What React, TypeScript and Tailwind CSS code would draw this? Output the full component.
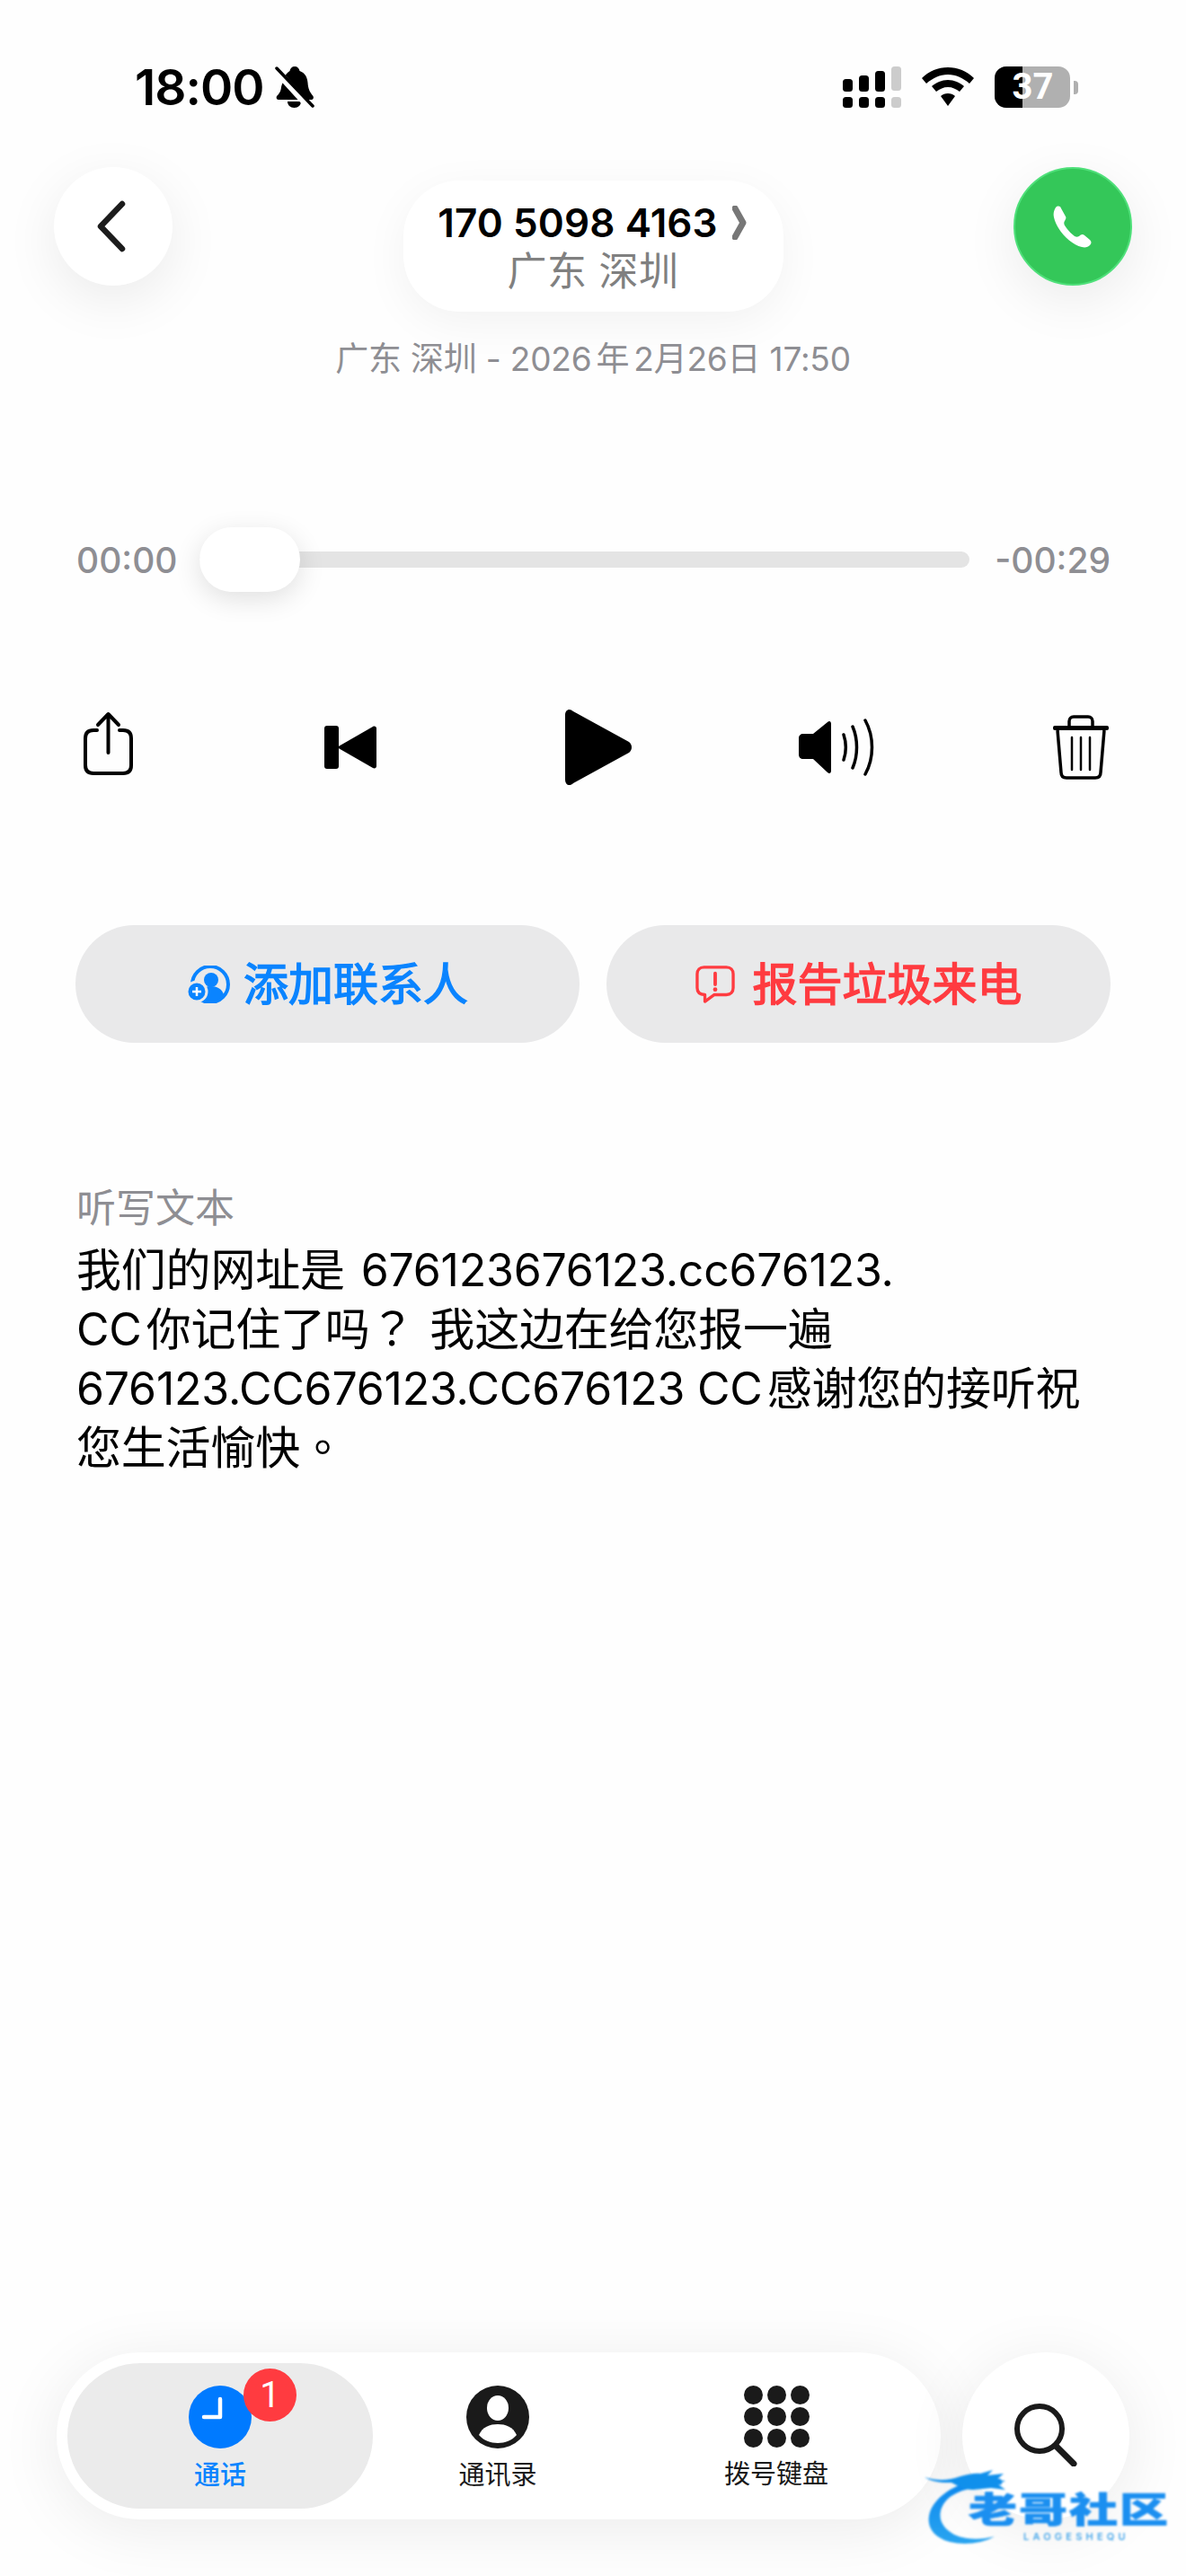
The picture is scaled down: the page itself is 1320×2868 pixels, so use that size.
import React from 'react';

const Sans = '"Inter", "Noto Sans CJK SC", sans-serif';

const BellSlash = () => (
  <svg width="44" height="46" viewBox="0 0 44 46" className="ml-[12px]">
    <path d="M22 0c3 0 5 2 5.500 5 6 2 8.500 7 9 13 .5 7 2 10 6 15 1 2 0 4-2 4H4c-2 0-3-2-2-4 3-3 4.500-5 5-10 1-5 2-4 3-8 1-6 4-8 6.500-10C17 2 19 0 22 0z" fill="#000" />
    <path d="M14 39h15c0 4-3 7-7.500 7S14 43 14 39z" fill="#000" />
    <path d="M0 3l40 44" stroke="#fff" strokeWidth="8" />
    <path d="M2 2l40 42" stroke="#000" strokeWidth="3.500" strokeLinecap="round" />
  </svg>
);

const Signal = () => (
  <svg width="66" height="46" viewBox="0 0 66 46">
    <rect x="0" y="14" width="11" height="14" rx="3.500" fill="#000" />
    <rect x="18" y="10" width="11" height="18" rx="3.500" fill="#000" />
    <rect x="36" y="5" width="11" height="23" rx="3.500" fill="#000" />
    <rect x="54" y="0" width="11" height="27" rx="3.500" fill="#ccc" />
    <rect x="0" y="34" width="11" height="12" rx="3.500" fill="#000" />
    <rect x="18" y="34" width="11" height="12" rx="3.500" fill="#000" />
    <rect x="36" y="34" width="11" height="12" rx="3.500" fill="#000" />
    <rect x="54" y="34" width="11" height="12" rx="3.500" fill="#ccc" />
  </svg>
);

const Wifi = () => (
  <svg width="58" height="44" viewBox="0 0 58 44">
    <path d="M29 0c11 0 21 4 29 12l-5 6C46 12 38 8 29 8S12 12 5 18l-5-6C8 4 18 0 29 0z" fill="#000" />
    <path d="M29 14c7 0 13 3 18 7l-5 6c-4-3-8-5-13-5s-9 2-13 5l-5-6c5-4 11-7 18-7z" fill="#000" />
    <path d="M29 29c3 0 6 1 8 3L29 43l-8-11c2-2 5-3 8-3z" fill="#000" />
  </svg>
);

const Battery = () => (
  <div className="flex items-center">
    <div className="relative w-[84px] h-[46px] rounded-[13px] overflow-hidden bg-[#b0b0b0]">
      <div className="h-full w-[31px] bg-black" />
      <div className="absolute inset-0 flex items-center justify-center pl-[1px] text-white text-[40px] font-bold leading-none font-['Roboto']">37</div>
    </div>
    <div className="ml-[4px] w-[5px] h-[15px] rounded-r-[4px] bg-[#b0b0b0]" />
  </div>
);

const StatusBar = () => (
  <div className="flex items-start justify-between h-[186px] pt-[74px] pl-[150px] pr-[120px]">
    <div className="flex items-center h-[46px]">
      <span className="text-[55px] font-semibold leading-none tracking-[-1px] text-black">18:00</span>
      <BellSlash />
    </div>
    <div className="flex items-start">
      <Signal />
      <div className="ml-[22px] mt-[1px]"><Wifi /></div>
      <div className="ml-[23px]"><Battery /></div>
    </div>
  </div>
);

const Header = () => (
  <div className="flex items-start justify-between px-[60px]">
    <div className="w-[132px] h-[132px] rounded-full bg-white shadow-[0_16px_60px_rgba(0,0,0,0.08)] flex items-center justify-center">
      <svg width="36" height="58" viewBox="0 0 36 58" className="mr-[5px]">
        <path d="M30 4L6 29l24 25" fill="none" stroke="#1c1c1c" strokeWidth="6.500" strokeLinecap="round" strokeLinejoin="round" />
      </svg>
    </div>
    <div className="mt-[15px] w-[423px] h-[146px] rounded-[62px] bg-white shadow-[0_12px_50px_rgba(0,0,0,0.05)] flex flex-col items-center pt-[20px]">
      <div className="flex items-center text-[44px] font-semibold leading-[54px] text-black pr-[2px]">
        <span className="tracking-[0.1px]">170 5098 4163</span>
        <svg width="16" height="38" viewBox="0 0 16 38" className="ml-[16px]">
          <path d="M3 3l9 16-9 16" fill="none" stroke="#777" strokeWidth="7" strokeLinecap="round" strokeLinejoin="round" />
        </svg>
      </div>
      <div className="text-[44px] leading-[54px] text-[#808080] tracking-[0.5px]">广东 深圳</div>
    </div>
    <div className="w-[132px] h-[132px] rounded-full bg-[#34c759] border-[2px] border-[#4fe07a] shadow-[0_16px_60px_rgba(0,0,0,0.08)] flex items-center justify-center">
      <svg width="48" height="48" viewBox="0 0 48 48">
        <path d="M5 3c2-2 5-2 6 1l5 9c1 2 0 3-1 5-1 1-1 3 0 5 3 5 7 9 11 12 2 1 3 1 5 0 2-2 4-3 6-1l6 5c2 2 2 4 0 6-2 2-5 3-9 2C21 44 6 28 3 14 2 10 3 6 5 3z" fill="#fff" />
      </svg>
    </div>
  </div>
);

const Slider = () => (
  <div className="flex items-center mt-[162px] pl-[85px] pr-[84px] h-[72px] text-[39px] font-medium leading-none text-[#8e8e93]">
    <span className="w-[137px] shrink-0">00:00</span>
    <div className="relative w-[857px] h-[18px] rounded-full bg-[#e4e4e4]">
      <div className="absolute left-0 top-[-27px] w-[112px] h-[72px] rounded-[36px] bg-white shadow-[0_8px_30px_rgba(0,0,0,0.12)]" />
    </div>
    <span className="ml-auto">-00:29</span>
  </div>
);

const Controls = () => (
  <div className="flex items-center mt-[130px] pl-[92px] h-[86px]">
    <svg width="58" height="72" viewBox="0 0 58 72" className="mt-[-8px]">
      <path d="M16 21H12C6 21 3 24 3 30v30c0 6 3 9 9 9h33c6 0 9-3 9-9V30c0-6-3-9-9-9h-4" fill="none" stroke="#000" strokeWidth="4" strokeLinecap="round" />
      <path d="M28.500 46V3M17 15L28.500 3 40 15" fill="none" stroke="#000" strokeWidth="4" strokeLinecap="round" strokeLinejoin="round" />
    </svg>
    <svg width="60" height="50" viewBox="0 0 60 50" className="ml-[210px]">
      <rect x="1" y="1" width="16" height="48" rx="3" fill="#000" />
      <path d="M15 25L55 2c2-1 4 0 4 2v42c0 2-2 3-4 2z" fill="#000" />
    </svg>
    <svg width="76" height="86" viewBox="0 0 76 86" className="ml-[208px]">
      <path d="M1 7C1 1 6-1 10 3l62 34c4 3 4 9 0 12L10 83c-4 4-9 2-9-4z" fill="#000" />
    </svg>
    <svg width="86" height="64" viewBox="0 0 86 64" className="ml-[184px]">
      <path d="M6 17h11L33 4c2-2 4-1 4 2v52c0 3-2 4-4 2L17 45H6c-3 0-5-2-5-5V22c0-3 2-5 5-5z" fill="#000" />
      <path d="M51 18c3 9 3 19 0 28M61 9c6 14 6 32 0 46M75 2c10 18 10 42 0 60" fill="none" stroke="#000" strokeWidth="3.500" strokeLinecap="round" />
    </svg>
    <svg width="62" height="72" viewBox="0 0 62 72" className="ml-[198px]">
      <path d="M18 13V7c0-3 2-5 5-5h16c3 0 5 2 5 5v6" fill="none" stroke="#000" strokeWidth="3.500" />
      <rect x="0" y="12" width="62" height="5" rx="2" fill="#000" />
      <path d="M5 17l4 47c0 4 2 6 6 6h32c4 0 6-2 6-6l4-47" fill="none" stroke="#000" strokeWidth="3.500" />
      <path d="M21 25v36M31 25v36M41 25v36" fill="none" stroke="#000" strokeWidth="2.500" strokeLinecap="round" />
    </svg>
  </div>
);

const Actions = () => (
  <div className="grid grid-cols-2 gap-[30px] mt-[155px] px-[84px]">
    <div className="h-[131px] rounded-[66px] bg-[#e9e9ea] flex items-center justify-center text-[#0a84ff]">
      <svg width="48" height="42" viewBox="0 0 48 42" className="mr-[15px]">
        <circle cx="26" cy="21" r="20" fill="none" stroke="#0a84ff" strokeWidth="4" />
        <circle cx="27" cy="16" r="8" fill="#0a84ff" />
        <path d="M12 33c3-8 9-10 15-10s12 3 14 9c-4 5-9 8-14 8s-11-2-15-7z" fill="#0a84ff" />
        <circle cx="11" cy="29" r="11" fill="#0a84ff" stroke="#e9e9ea" strokeWidth="3" />
        <path d="M6 29h10M11 24v10" stroke="#fff" strokeWidth="2.500" />
      </svg>
      <span className="text-[50px] font-normal leading-none [-webkit-text-stroke:1.4px_#0a84ff]">添加联系人</span>
    </div>
    <div className="h-[131px] rounded-[66px] bg-[#e9e9ea] flex items-center justify-center text-[#ff3b40]">
      <svg width="44" height="42" viewBox="0 0 46 44" className="mr-[20px]">
        <path d="M10 2h26c5 0 8 3 8 8v16c0 5-3 8-8 8H22L11 42v-8c-6 0-9-3-9-8V10c0-5 3-8 8-8z" fill="none" stroke="#ff3b40" strokeWidth="3.500" strokeLinejoin="round" />
        <path d="M23 9v13" stroke="#ff3b40" strokeWidth="4" strokeLinecap="round" />
        <circle cx="23" cy="28" r="2.500" fill="#ff3b40" />
      </svg>
      <span className="text-[50px] font-normal leading-none [-webkit-text-stroke:1.4px_#ff3b40]">报告垃圾来电</span>
    </div>
  </div>
);

const Transcript = () => (
  <div className="mt-[154px] pl-[85px] pr-[60px]">
    <div className="text-[44px] leading-[60px] text-[#8e8e93]">听写文本</div>
    <div className="mt-[6px] text-[50px] leading-[66px] tracking-[-0.2px] text-black">
      <div>我们的网址是 <span className="ml-[4px]">676123676123.cc676123.</span></div>
      <div>CC<span className="ml-[5px]">你记住了吗</span><span className="leading-none font-['Noto_Sans_CJK_TC']">？</span> <span className="ml-[3px]">我这边在给您报一遍</span></div>
      <div>676123.CC676123.CC676123 CC<span className="ml-[5px]">感谢您的接听祝</span></div>
      <div>您生活愉快<span className="leading-none font-['Noto_Sans_CJK_TC']">。</span></div>
    </div>
  </div>
);

const TabBar = () => (
  <div className="flex items-start pl-[63px]">
    <div className="w-[984px] h-[186px] rounded-[93px] bg-white shadow-[0_10px_70px_rgba(0,0,0,0.08)] p-[12px] flex items-stretch">
      <div className="relative w-[340px] rounded-[81px] bg-[#ebebeb] flex flex-col items-center pt-[25px]">
        <div className="relative w-[70px] h-[70px]">
          <svg width="70" height="70" viewBox="0 0 70 70">
            <circle cx="35" cy="35" r="35" fill="#007aff" />
            <path d="M35 15v20H17" fill="none" stroke="#fff" strokeWidth="4.500" strokeLinecap="round" strokeLinejoin="round" />
          </svg>
          <div className="absolute left-[61px] top-[-19px] w-[59px] h-[59px] rounded-full bg-[#ff3b40] flex items-center justify-center text-white text-[40px] leading-none font-['Roboto']">1</div>
        </div>
        <span className="mt-[11px] text-[29px] leading-[38px] font-medium text-[#0a84ff]">通话</span>
      </div>
      <div className="w-[278px] flex flex-col items-center pt-[25px]">
        <svg width="70" height="70" viewBox="0 0 70 70">
          <circle cx="35" cy="35" r="35" fill="#1a1a1a" />
          <ellipse cx="35" cy="25" rx="12" ry="14" fill="#fff" />
          <path d="M14 55c4-9 12-12 21-12s17 3 21 12c-5 6-13 9-21 9s-16-3-21-9z" fill="#fff" />
        </svg>
        <span className="mt-[11px] text-[29px] leading-[38px] text-[#1a1a1a]">通讯录</span>
      </div>
      <div className="w-[342px] flex flex-col items-center pt-[25px]">
        <div className="grid grid-cols-3 gap-x-[5px] gap-y-[3px]">
          {Array.from({ length: 9 }).map((_, i) => (
            <div key={i} className="w-[21px] h-[21px] rounded-full bg-[#1a1a1a]" />
          ))}
        </div>
        <span className="mt-[11px] text-[29px] leading-[38px] text-[#1a1a1a]">拨号键盘</span>
      </div>
    </div>
    <div className="ml-[24px] w-[186px] h-[186px] rounded-full bg-white shadow-[0_10px_70px_rgba(0,0,0,0.08)] flex items-center justify-center">
      <svg width="70" height="70" viewBox="0 0 70 70" className="mt-[-2px]">
        <circle cx="28" cy="28" r="25" fill="none" stroke="#1a1a1a" strokeWidth="6" />
        <path d="M46 47l20 20" stroke="#1a1a1a" strokeWidth="7" strokeLinecap="round" />
      </svg>
    </div>
  </div>
);

const Watermark = () => (
  <div className="absolute left-[1029px] top-[2750px] w-[270px] h-[85px] blur-[0.8px]">
    <svg width="120" height="85" viewBox="0 0 120 85" className="absolute left-0 top-0">
      <defs>
        <linearGradient id="dragon" x1="0" y1="0" x2="0" y2="1">
          <stop offset="0" stopColor="#0a86ee" />
          <stop offset="1" stopColor="#2aa5f0" />
        </linearGradient>
      </defs>
      <path d="M85 10C55 8 22 18 8 42c-8 16-2 32 20 38 16 4 36 2 50-6-16 4-36 4-48-4C14 60 14 44 26 32c14-12 36-14 60-16z" fill="url(#dragon)" />
      <path d="M0 8c14 4 26 4 40-1 8-2 16-4 22-3l14-4-6 6 18-2-8 7 10 1-8 4 8 6-16-2-20 2c-10 0-16-4-24-8-10 0-20 0-30-6z" fill="#1090ec" />
    </svg>
    <div className="absolute left-[49px] top-[25px] w-[222px] flex justify-between text-[#1b8ff0] text-[54px] leading-none font-black scale-y-[0.72] origin-top [-webkit-text-stroke:1px_#1b8ff0]">
      <span>老</span><span>哥</span><span>社</span><span>区</span>
    </div>
    <div className="absolute left-[110px] top-[69px] text-[11px] leading-none font-semibold tracking-[4.200px] text-[#4aa8ea]">LAOGESHEQU</div>
  </div>
);

export default function App() {
  return (
    <div className="relative w-[1320px] h-[2868px] overflow-hidden bg-[#fefefe]" style={{ fontFamily: Sans }}>
      <StatusBar />
      <Header />
      <div className="mt-[28px] text-center text-[37px] leading-[50px] tracking-[-0.2px] text-[#8e8e93]">广东 深圳 - 2026<span className="mx-[5px]">年</span>2月26日 17:50</div>
      <Slider />
      <Controls />
      <Actions />
      <Transcript />
      <div className="absolute inset-x-0 top-[2619px]">
        <TabBar />
      </div>
      <Watermark />
    </div>
  );
}
